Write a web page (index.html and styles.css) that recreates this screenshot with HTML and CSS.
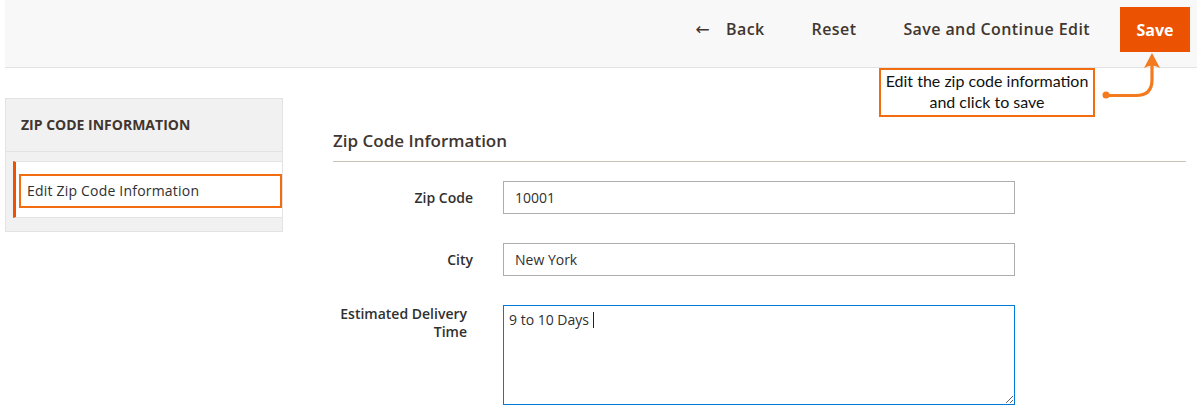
FILE: index.html
```html
<!DOCTYPE html>
<html lang="en">
<head>
    <meta charset="UTF-8">
    <meta name="viewport" content="width=device-width, initial-scale=1.0">
    <title>Zip Code Information</title>
    <link rel="stylesheet" href="styles.css">
</head>
<body>
    <div class="page-wrap">
        <div class="page-header">
            <div class="page-actions">
                <button class="action-link back"><span class="back-arrow">&#8592;</span>Back</button>
                <button class="action-link">Reset</button>
                <button class="action-link">Save and Continue Edit</button>
                <button class="save-button">Save</button>
            </div>
        </div>

        <!-- tutorial callout over the header -->
        <div class="callout">Edit the zip code information<br>and click to save</div>
        <svg class="callout-arrow" width="72" height="56" viewBox="0 0 72 56" fill="none">
            <circle cx="8" cy="45" r="3.5" fill="#f47a1f"/>
            <path d="M8 45.5 H38 Q54 45.5 54 30 V14" stroke="#f47a1f" stroke-width="3.2" stroke-linecap="round"/>
            <path d="M54 3 L46 18 Q54 13 62 18 Z" fill="#f47a1f"/>
        </svg>

        <div class="page-main">
            <div class="page-nav">
                <div class="nav-title">ZIP CODE INFORMATION</div>
                <div class="nav-item">
                    <div class="nav-link">Edit Zip Code Information</div>
                </div>
            </div>

            <div class="page-content">
                <div class="fieldset-title">Zip Code Information</div>

                <div class="field">
                    <label class="field-label">Zip Code</label>
                    <input type="text" class="field-input" value="10001">
                </div>
                <div class="field">
                    <label class="field-label">City</label>
                    <input type="text" class="field-input" value="New York">
                </div>
                <div class="field">
                    <label class="field-label multi">Estimated Delivery Time</label>
                    <div class="textarea-wrap">
                        <textarea class="field-textarea">9 to 10 Days</textarea>
                        <span class="caret"></span>
                    </div>
                </div>
            </div>
        </div>
    </div>
</body>
</html>
```

FILE: styles.css
```css
body {
    margin: 0;
    padding: 0;
    font-family: "Open Sans", "Liberation Sans", sans-serif;
    background: #ffffff;
    color: #303030;
}

.page-wrap {
    position: relative;
    padding-left: 5px;
}

.page-header {
    height: 67px;
    background: #f8f8f8;
    border-bottom: 1px solid #e3e3e3;
    display: flex;
    justify-content: flex-end;
}

.page-actions {
    display: flex;
    align-items: flex-start;
    padding-top: 7px;
    padding-right: 7px;
}

.action-link {
    background: none;
    border: none;
    padding: 0;
    margin-right: 47px;
    height: 44px;
    font-family: "Open Sans", sans-serif;
    font-size: 16px;
    font-weight: 600;
    letter-spacing: 0.4px;
    color: #41362f;
    display: flex;
    align-items: center;
    cursor: pointer;
}

.action-link:nth-child(3) {
    margin-right: 30px;
}

.back-arrow {
    font-size: 17px;
    font-weight: 400;
    margin-right: 16px;
    font-family: "DejaVu Sans", sans-serif;
}

.save-button {
    background: #eb5202;
    border: none;
    color: #ffffff;
    height: 45px;
    width: 70px;
    font-family: "Open Sans", sans-serif;
    font-size: 16px;
    font-weight: 700;
    cursor: pointer;
}

.callout {
    position: absolute;
    left: 879px;
    top: 68px;
    width: 212px;
    height: 45px;
    border: 2px solid #f26d0f;
    background: #ffffff;
    font-family: Lato, "Liberation Sans", sans-serif;
    font-size: 16px;
    line-height: 21px;
    color: #111111;
    text-align: center;
    padding-top: 0;
    box-sizing: content-box;
}

.callout-arrow {
    position: absolute;
    left: 1098px;
    top: 50px;
}

.page-main {
    display: flex;
    margin-top: 30px;
}

.page-nav {
    width: 276px;
    flex-shrink: 0;
    background: #f1f1f1;
    border: 1px solid #e3e3e3;
    align-self: flex-start;
}

.nav-title {
    height: 52px;
    line-height: 52px;
    padding-left: 15px;
    font-size: 14px;
    font-weight: 700;
    color: #41362f;
    border-bottom: 1px solid #e3e3e3;
}

.nav-item {
    margin: 9px 0 13px 7px;
    background: #ffffff;
    border-left: 3px solid #eb5202;
    border-top: 1px solid #e3e3e3;
    border-bottom: 1px solid #e3e3e3;
    padding: 12px 0 9px 3px;
}

.nav-link {
    border: 2px solid #f26d0f;
    height: 30px;
    line-height: 30px;
    padding-left: 6px;
    font-size: 14px;
    letter-spacing: 0.2px;
    color: #303030;
}

.page-content {
    flex: 1;
    margin-left: 50px;
    margin-right: 11px;
}

.fieldset-title {
    margin-top: 32px;
    padding-bottom: 9px;
    border-bottom: 1px solid #cac3b4;
    font-size: 17px;
    font-weight: 600;
    line-height: 22px;
    color: #41362f;
}

.field {
    display: flex;
    align-items: flex-start;
    margin-top: 19px;
}

.field + .field {
    margin-top: 29px;
}

.field-label {
    width: 140px;
    flex-shrink: 0;
    margin-right: 30px;
    text-align: right;
    font-size: 14px;
    font-weight: 600;
    line-height: 33px;
    color: #303030;
}

.field-label.multi {
    line-height: 18px;
    width: 134px;
    margin-right: 36px;
}

.field-input {
    width: 512px;
    height: 33px;
    box-sizing: border-box;
    border: 1px solid #adadad;
    padding: 0 11px;
    font-family: "Open Sans", sans-serif;
    font-size: 14px;
    color: #303030;
    outline: none;
}

.textarea-wrap {
    position: relative;
}

.field-textarea {
    display: block;
    width: 512px;
    height: 100px;
    box-sizing: border-box;
    border: 1px solid #007bdb;
    padding: 3px 5px;
    font-family: "Open Sans", sans-serif;
    font-size: 14px;
    line-height: 22px;
    color: #303030;
    outline: none;
    resize: vertical;
}

.caret {
    position: absolute;
    left: 90px;
    top: 7px;
    width: 1px;
    height: 16px;
    background: #222222;
}
```
